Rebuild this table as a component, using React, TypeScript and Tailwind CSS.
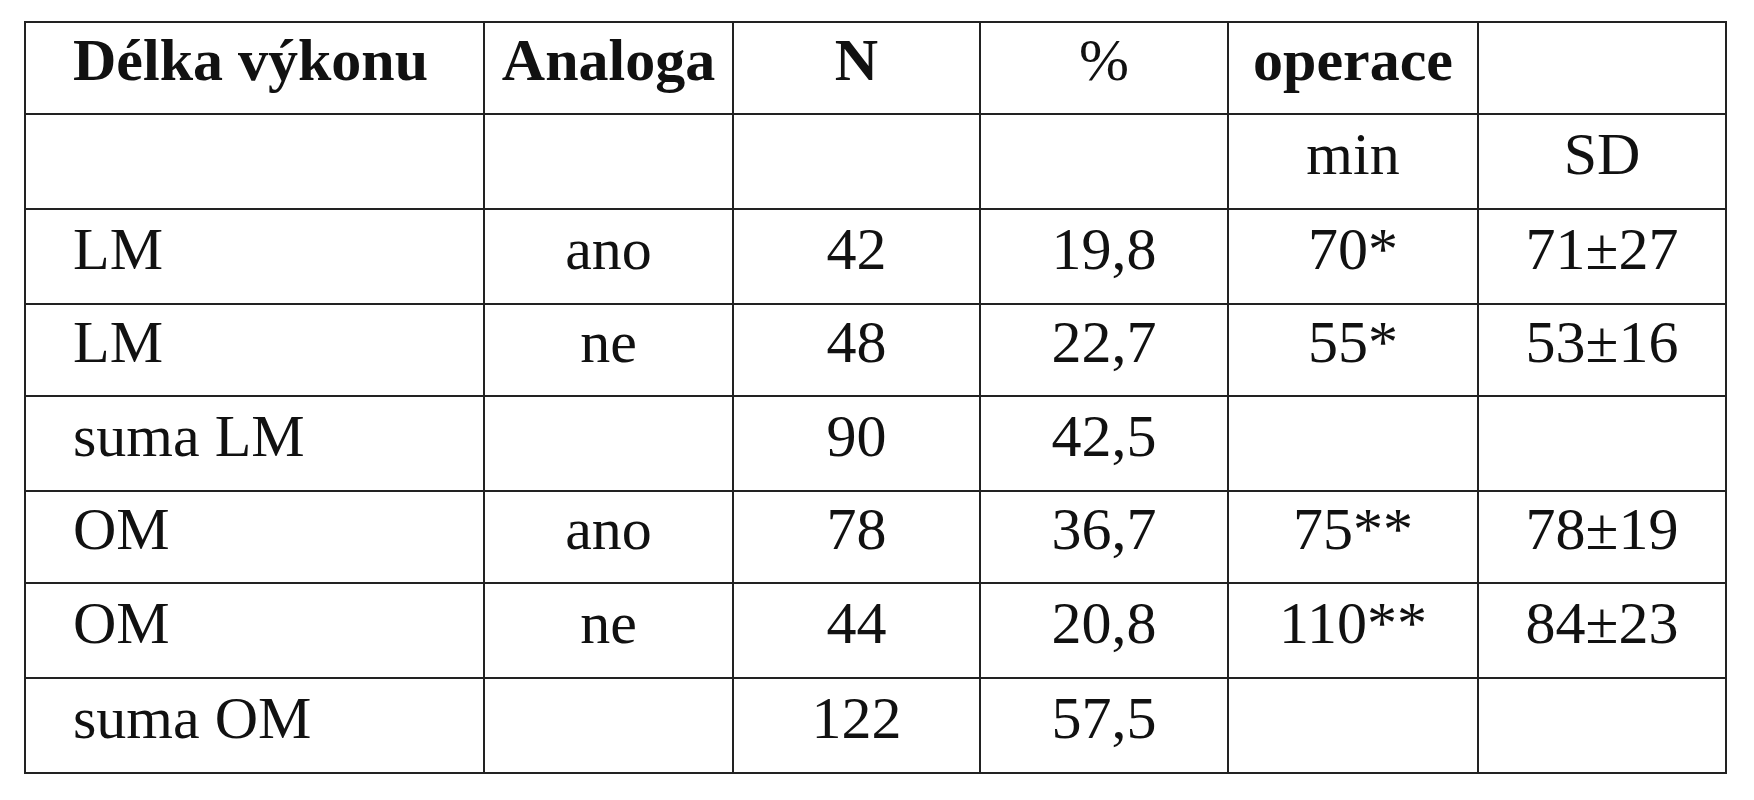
const rows: { cells: string[]; head?: boolean }[] = [
  { cells: ['Délka výkonu', 'Analoga', 'N', '%', 'operace', ''], head: true },
  { cells: ['', '', '', '', 'min', 'SD'] },
  { cells: ['LM', 'ano', '42', '19,8', '70*', '71±27'] },
  { cells: ['LM', 'ne', '48', '22,7', '55*', '53±16'] },
  { cells: ['suma LM', '', '90', '42,5', '', ''] },
  { cells: ['OM', 'ano', '78', '36,7', '75**', '78±19'] },
  { cells: ['OM', 'ne', '44', '20,8', '110**', '84±23'] },
  { cells: ['suma OM', '', '122', '57,5', '', ''] },
];

export default function App() {
  return (
    <div className="w-[1754px] h-[800px] bg-white pt-[21px] pl-[24px] overflow-hidden">
      <div
        className="grid w-[1703px] grid-cols-[459px_249px_247px_248px_250px_248px] grid-rows-[92px_95px_95px_92px_95px_92px_95px_95px] border-l-2 border-t-2 border-[#222] text-[60px] leading-none text-[#111]"
        style={{ fontFamily: '"Liberation Serif", "Times New Roman", serif' }}
      >
        {rows.map((row, r) =>
          row.cells.map((text, c) => (
            <div
              key={`${r}-${c}`}
              className={
                'flex items-center border-r-2 border-b-2 border-[#222] pb-[16px] ' +
                (c === 0 ? 'justify-start pl-[47px] ' : 'justify-center ') +
                (row.head && text !== '%' ? 'font-bold' : 'font-normal')
              }
            >
              {text}
            </div>
          )),
        )}
      </div>
    </div>
  );
}
